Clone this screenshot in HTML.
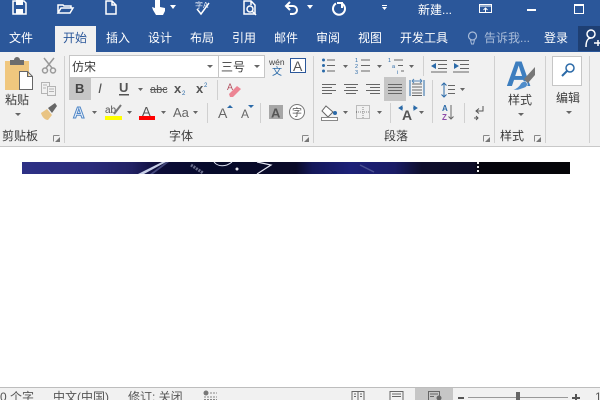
<!DOCTYPE html>
<html><head><meta charset="utf-8"><style>
html,body{margin:0;padding:0;background:#fff;width:600px;height:400px;overflow:hidden}
svg{display:block}
text{font-family:"Liberation Sans","Noto Sans CJK SC",sans-serif}
.t{font-size:12px;fill:#fff}
.k{font-size:12px;fill:#3c3c3c}
.l{stroke:#666;stroke-width:1;fill:none}
.w{stroke:#fff;stroke-width:1.5;fill:none}
.s{stroke:#d0d0d0;stroke-width:1}
.a{fill:#666}
</style></head><body>
<svg width="600" height="400" viewBox="0 0 600 400" xmlns="http://www.w3.org/2000/svg">
<defs>
<linearGradient id="g" x1="0" x2="1" y1="0" y2="0">
<stop offset="0" stop-color="#2d3085"/><stop offset=".12" stop-color="#2b2c7c"/><stop offset=".2" stop-color="#222264"/><stop offset=".25" stop-color="#0c0c38"/><stop offset=".35" stop-color="#060a2a"/><stop offset=".5" stop-color="#0a0a28"/><stop offset=".53" stop-color="#14185a"/><stop offset=".6" stop-color="#1c2078"/><stop offset=".68" stop-color="#1a1c66"/><stop offset=".73" stop-color="#0e0e2c"/><stop offset=".825" stop-color="#0c0c26"/><stop offset=".835" stop-color="#05040c"/><stop offset="1" stop-color="#050508"/>
</linearGradient>
</defs>
<rect width="600" height="400" fill="#fff"/>
<rect width="600" height="52" fill="#2b579a"/>
<rect y="52" width="600" height="94" fill="#f1f1f1"/>
<rect y="146" width="600" height="1" fill="#c8c8c8"/>
<rect x="55" y="26" width="41" height="27" fill="#f1f1f1"/>
<rect x="578" y="26" width="22" height="25" fill="#1e3f73"/>

<!-- Quick access -->
<path d="M13 1h11l2 2v11H13z" class="w"/><rect x="16" y="0" width="7" height="5" fill="#fff"/><rect x="16" y="9" width="7" height="5" fill="#fff"/>
<path d="M58 13V5h5l1 1h7v2M58 13l3-5h12l-3 5z" class="w"/>
<path d="M106 1h6l4 4v9h-10zM112 1v4h4" class="w"/>
<path d="M155 0v8l-3-1 1 3 3 5h7l2-4V8l-5-1V0z" fill="#fff"/>
<path d="M170 5h6l-3 4z" fill="#fff"/>
<text x="195" y="8" font-size="8" fill="#dfe6f2">字A</text>
<path d="M197 9l4 5 8-11" class="w" stroke-width="2"/>
<path d="M244 1h7l4 4v9h-11zM251 1v4" class="w"/><circle cx="250" cy="9" r="3" class="w"/><path d="M252 11l4 4" class="w"/>
<path d="M290 2l-4 4 4 4M286 6h7a4 4 0 0 1 0 8h-3" fill="none" stroke="#fff" stroke-width="2"/>
<path d="M307 5h6l-3 4z" fill="#fff"/>
<path d="M336 3.500a6 6 0 1 0 6 0M337 3h5v5" fill="none" stroke="#fff" stroke-width="2"/>
<path d="M382 5h5v1h-5zM382 7h5l-2.500 3z" fill="#fff"/>
<text x="418" y="14" class="t">新建...</text>
<rect x="479.500" y="4.500" width="12" height="8" fill="none" stroke="#fff"/><path d="M479 6h13M485.500 12V8M483.500 10l2-2 2 2" stroke="#fff" fill="none"/>
<rect x="527" y="9" width="9" height="2" fill="#fff"/>
<rect x="574.500" y="4.500" width="9" height="9" fill="none" stroke="#fff"/><rect x="574" y="4" width="10" height="2" fill="#fff"/>

<!-- Tabs -->
<text x="9" y="42" class="t">文件</text>
<text x="63" y="42" font-size="12" fill="#2b579a">开始</text>
<text x="106" y="42" class="t">插入</text>
<text x="148" y="42" class="t">设计</text>
<text x="190" y="42" class="t">布局</text>
<text x="232" y="42" class="t">引用</text>
<text x="274" y="42" class="t">邮件</text>
<text x="316" y="42" class="t">审阅</text>
<text x="358" y="42" class="t">视图</text>
<text x="400" y="42" class="t">开发工具</text>
<circle cx="472.500" cy="36" r="4" fill="none" stroke="#a9bcd9" stroke-width="1.200"/><path d="M470.500 40l1 4h2l1-4" fill="none" stroke="#a9bcd9"/>
<text x="484" y="42" font-size="12" fill="#a9bcd9">告诉我...</text>
<text x="544" y="42" class="t">登录</text>
<circle cx="591" cy="34" r="4" fill="none" stroke="#fff" stroke-width="1.500"/><path d="M586 47c0-6 2-9 5-9M594 43h7M598 40v6" fill="none" stroke="#fff" stroke-width="1.500"/>

<!-- Clipboard group -->
<rect x="5" y="61" width="24" height="29" fill="#f0c77e"/>
<path d="M10 60h4a3 3 0 0 1 6 0h4v5H10z" fill="#6d6d6d"/>
<path d="M19.500 71.500h8l5 5v13h-13zM27.500 71.500v5h5" fill="#fff" stroke="#666"/>
<text x="5" y="104" class="k" fill="#333">粘贴</text>
<path d="M15 113h6l-3 3z" class="a"/>
<g stroke="#999" fill="none" stroke-width="1.500"><path d="M44 58l8 10M54 58l-8 10"/><circle cx="45" cy="70.500" r="2.500"/><circle cx="53" cy="70.500" r="2.500"/></g>
<g stroke="#b4b4b4" fill="#f1f1f1"><path d="M41.500 82.500h8v11h-8z"/><path d="M47.500 86.500h8v9h-8z"/><path d="M49 89h5M49 91.500h5M43 85h4M43 88h3" fill="none"/></g>
<path d="M41 113l6-4 5 6-4 5c-3 0-6-3-7-7z" fill="#e9c483"/><path d="M48 108l7-5 2 3-5 7z" fill="#666"/>
<text x="2" y="140" class="k">剪贴板</text>
<path d="M53.500 135.500h6M53.500 135.500v6" stroke="#888" fill="none"/><path d="M60 142v-5l-5 5z" fill="#777"/>
<line x1="64.500" y1="56" x2="64.500" y2="143" class="s"/>

<!-- Font group -->
<rect x="69.500" y="55.500" width="149" height="22" fill="#fff" stroke="#c6c6c6"/>
<rect x="218.500" y="55.500" width="46" height="22" fill="#fff" stroke="#c6c6c6"/>
<text x="72" y="71" class="k">仿宋</text>
<path d="M207 65h6l-3 3z" class="a"/>
<text x="221" y="71" class="k" font-size="13">三号</text>
<path d="M254 65h6l-3 3z" class="a"/>
<text x="269" y="65" font-size="8.500" fill="#444">wén</text>
<text x="272" y="75" font-size="10" fill="#2b6aa8">文</text>
<rect x="290.500" y="58.500" width="15" height="14" fill="#fff" stroke="#2b579a"/>
<text x="293" y="71" font-size="14" fill="#555">A</text>

<rect x="69" y="77" width="22" height="23" fill="#c6c6c6"/>
<text x="75" y="93" font-size="13" font-weight="bold" fill="#444">B</text>
<text x="98" y="93" font-size="14" font-style="italic" fill="#555" font-family="Liberation Serif">I</text>
<text x="119" y="92" font-size="13" font-weight="bold" fill="#555">U</text><rect x="119" y="94" width="10" height="1.500" fill="#555"/>
<path d="M138 88h5l-2.500 3z" class="a"/>
<text x="150" y="93" font-size="11" fill="#555">abc</text><rect x="150" y="89" width="17" height="1" fill="#555"/>
<text x="174" y="93" font-size="13" font-weight="bold" fill="#555">x</text><text x="182" y="95" font-size="6" fill="#2b6aa8">2</text>
<text x="196" y="93" font-size="13" font-weight="bold" fill="#555">x</text><text x="204" y="87" font-size="6" fill="#2b6aa8">2</text>
<line x1="217.500" y1="80" x2="217.500" y2="100" class="s"/>
<text x="227" y="90" font-size="9" fill="#b04a5a">A</text>
<path d="M229 94l8-8 4 3-8 8h-3z" fill="#ec8594"/>

<text x="73" y="118" font-size="16" fill="#eaf1fa" stroke="#4f86c6" stroke-width="1" font-weight="bold">A</text>
<path d="M92 111h5l-2.500 3z" class="a"/>
<text x="105" y="113" font-size="10" fill="#555">ab</text><path d="M114 114l7-9" stroke="#777" stroke-width="2"/>
<rect x="105" y="116" width="17" height="4" fill="#ffff00"/>
<path d="M127 111h5l-2.500 3z" class="a"/>
<text x="142" y="116" font-size="13" fill="#555">A</text>
<rect x="139" y="116" width="16" height="4" fill="#f00"/>
<path d="M161 111h5l-2.500 3z" class="a"/>
<text x="173" y="117" font-size="13" fill="#666">Aa</text>
<path d="M193 111h5l-2.500 3z" class="a"/>
<line x1="207.500" y1="103" x2="207.500" y2="123" class="s"/>
<text x="218" y="118" font-size="14" fill="#666">A</text><path d="M227 108h6l-3-3z" fill="#2b6aa8"/>
<text x="241" y="118" font-size="12" fill="#666">A</text><path d="M248 105h6l-3 3z" fill="#2b6aa8"/>
<line x1="260.500" y1="103" x2="260.500" y2="123" class="s"/>
<rect x="269" y="105" width="14" height="14" fill="#a6a6a6"/><text x="271" y="117.500" font-size="13" font-weight="bold" fill="#555">A</text>
<circle cx="297" cy="112" r="7.500" fill="#fff" stroke="#777"/><text x="292" y="116" font-size="10" fill="#555">字</text>
<text x="169" y="140" class="k">字体</text>
<path d="M302.500 135.500h6M302.500 135.500v6" stroke="#888" fill="none"/><path d="M309 142v-5l-5 5z" fill="#777"/>
<line x1="313.500" y1="56" x2="313.500" y2="143" class="s"/>

<!-- Paragraph group -->
<g fill="#2b6aa8"><circle cx="323.500" cy="60" r="1.500"/><circle cx="323.500" cy="65.500" r="1.500"/><circle cx="323.500" cy="71" r="1.500"/></g>
<path d="M327 60h8M327 65.500h8M327 71h8" class="l"/>
<path d="M343 65h5l-2.500 3z" class="a"/>
<text x="355" y="62" font-size="5.500" fill="#2b6aa8">1</text><text x="355" y="68" font-size="5.500" fill="#2b6aa8">2</text><text x="355" y="74" font-size="5.500" fill="#2b6aa8">3</text>
<path d="M361 60h9M361 65.500h9M361 71h9" class="l"/>
<path d="M377 65h5l-2.500 3z" class="a"/>
<text x="388" y="62" font-size="5.500" fill="#2b6aa8">1</text><text x="392" y="68" font-size="5.500" fill="#2b6aa8">a</text><text x="397" y="74" font-size="5.500" fill="#2b6aa8">i</text>
<path d="M394 60h9M398 65.500h5M401 71h3" class="l"/>
<path d="M409 65h5l-2.500 3z" class="a"/>
<line x1="423.500" y1="56" x2="423.500" y2="76" class="s"/>
<path d="M431 66l5-3v6z" fill="#2b6aa8"/><path d="M431 60.500h16M438 64.500h9M438 68.500h9M431 72h16" class="l"/>
<path d="M459 66l-5-3v6z" fill="#2b6aa8"/><path d="M453 60.500h16M460 64.500h9M460 68.500h9M453 72h16" class="l"/>

<path d="M322 84.500h14M322 87.500h10M322 90.500h14M322 93.500h10" class="l"/>
<path d="M344 84.500h14M346 87.500h10M344 90.500h14M346 93.500h10" class="l"/>
<path d="M366 84.500h14M370 87.500h10M366 90.500h14M370 93.500h10" class="l"/>
<rect x="384" y="77" width="22" height="24" fill="#c6c6c6"/>
<path d="M388 84.500h14M388 87.500h14M388 90.500h14M388 93.500h14" class="l"/>
<path d="M410 80v16M424 80v16" stroke="#2b6aa8" fill="none"/><path d="M412 84h10M412 87h10M412 90h10M412 93h10M412 95.500h10" class="l"/>
<path d="M412 81h10M412 81l2-2M412 81l2 2M422 81l-2-2M422 81l-2 2" stroke="#2b6aa8" fill="none" opacity=".8"/>
<line x1="432.500" y1="80" x2="432.500" y2="123" class="s"/>
<path d="M444 83v14M441.500 85.500l2.500-2.500 2.500 2.500M441.500 94.500l2.500 2.500 2.500-2.500" stroke="#2b6aa8" fill="none"/>
<path d="M448 85.500h7M448 89.500h7M448 93.500h7" class="l"/>
<path d="M460 88h5l-2.500 3z" class="a"/>

<path d="M326 106l7 6-5 5-6-6z" fill="#fff" stroke="#666"/><circle cx="335" cy="113" r="2" fill="#2b6aa8"/>
<rect x="321.500" y="117.500" width="16" height="3" fill="#fff" stroke="#888"/>
<path d="M343 111h5l-2.500 3z" class="a"/>
<rect x="356.500" y="105.500" width="13" height="13" fill="none" stroke="#888" stroke-dasharray="1 1"/><path d="M363 105v13M356 112h13" stroke="#888" stroke-dasharray="1 1"/>
<path d="M377 111h5l-2.500 3z" class="a"/>
<line x1="390.500" y1="103" x2="390.500" y2="123" class="s"/>
<text x="402" y="120" font-size="14" font-weight="bold" fill="#555">A</text>
<path d="M399 108l3-2v4zM403 108h-2M417 108l-3-2v4zM413 108h2" fill="#2b6aa8" stroke="#2b6aa8"/>
<path d="M419 111h5l-2.500 3z" class="a"/>
<text x="442" y="111" font-size="8" fill="#2b6aa8" font-weight="bold">A</text>
<text x="442" y="120" font-size="8" fill="#8d4aa8" font-weight="bold">Z</text>
<path d="M451 105v14M448.500 116.500l2.500 2.500 2.500-2.500" class="l"/>
<line x1="464.500" y1="103" x2="464.500" y2="123" class="s"/>
<path d="M483 106v5h-7M479 108.500l-3 2.500 3 2.500M474 118h4M476 116l2 2-2 2" stroke="#555" fill="none"/>
<text x="384" y="140" class="k">段落</text>
<path d="M483.500 135.500h6M483.500 135.500v6" stroke="#888" fill="none"/><path d="M490 142v-5l-5 5z" fill="#777"/>
<line x1="494.500" y1="56" x2="494.500" y2="143" class="s"/>

<!-- Styles -->
<text x="506" y="86" font-size="35" font-weight="bold" fill="#3d7ebf">A</text>
<path d="M524 79l11-12v8l-7 8z" fill="#777"/>
<path d="M512 90c4-1 7-3 9-7 2-2 5-2 6 0s0 4-3 5l-6 2z" fill="#4f8dcb" stroke="#f1f1f1" stroke-width=".6"/>
<text x="508" y="104" class="k">样式</text>
<path d="M518 113h6l-3 3z" class="a"/>
<text x="500" y="140" class="k">样式</text>
<path d="M534.500 135.500h6M534.500 135.500v6" stroke="#888" fill="none"/><path d="M541 142v-5l-5 5z" fill="#777"/>
<line x1="545.500" y1="56" x2="545.500" y2="143" class="s"/>

<!-- Edit -->
<rect x="552.500" y="56.500" width="29" height="29" fill="#fff" stroke="#c6c6c6"/>
<circle cx="570" cy="68" r="4" fill="none" stroke="#2b6aa8" stroke-width="1.500"/><path d="M567 71l-5 5" stroke="#2b6aa8" stroke-width="2"/>
<text x="556" y="102" class="k">编辑</text>
<path d="M566 111h6l-3 3z" class="a"/>
<line x1="589.500" y1="56" x2="589.500" y2="143" class="s"/>

<!-- Document image strip -->
<rect x="22" y="162" width="548" height="12" fill="url(#g)"/>
<path d="M138 174l24-12h4l-22 12z" fill="#c8cfe8"/>
<path d="M150 174l16-12h3l-16 12z" fill="#5a6098" opacity=".7"/>
<path d="M214 162c4 5 12 5 18 0" fill="none" stroke="#e0e4f4" stroke-width="1"/>
<circle cx="237" cy="169" r="1.500" fill="#e8e8f0"/>
<path d="M257 162l14 3-14 9" fill="none" stroke="#e4e6f2" stroke-width="1.200"/>
<path d="M191 165l12 8" stroke="#6a6e8c" stroke-width="3" stroke-dasharray="2 1" fill="none"/>
<path d="M360 165l14 7" stroke="#4a5090" stroke-width="1.500"/>
<path d="M478 162v12" stroke="#eee" stroke-width="2" stroke-dasharray="2 2"/>

<!-- Status bar -->
<rect y="387" width="600" height="13" fill="#f1f1f1"/>
<rect y="387" width="600" height="1" fill="#bdbdbd"/>
<text x="0" y="401" font-size="12" fill="#555">0 个字</text>
<text x="53" y="401" font-size="12" fill="#555">中文(中国)</text>
<text x="128" y="401" font-size="12" fill="#555">修订: 关闭</text>
<circle cx="206" cy="393" r="2.500" fill="#777"/><path d="M210 393h7M204 397h13M204 399.500h13" stroke="#888" stroke-dasharray="2 1" fill="none"/>
<path d="M352 391.500h12v9h-12zM358 391.500v9M354 394h2M354 396.500h2M360 394h2M360 396.500h2" class="l"/>
<path d="M390 391.500h13v9h-13zM392 394h9M392 396.500h9" class="l"/>
<rect x="415" y="388" width="38" height="12" fill="#c6c6c6"/>
<path d="M428.500 391.500h11v9h-11zM430 394h8M430 396.500h4" class="l"/><circle cx="439" cy="398" r="2.500" fill="#666"/>
<rect x="458" y="397" width="6" height="2" fill="#555"/>
<rect x="468" y="397" width="100" height="1" fill="#999"/>
<rect x="516" y="392" width="4" height="8" fill="#666"/>
<path d="M572 398h8M576 394v6" stroke="#555" stroke-width="2"/>
<text x="595" y="401" font-size="12" fill="#555">1</text>
</svg>
</body></html>
